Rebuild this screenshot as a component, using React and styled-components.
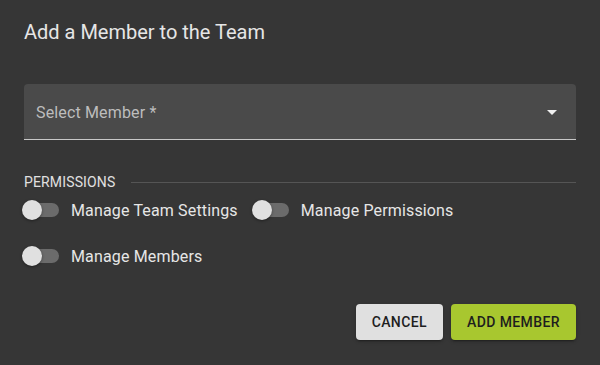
import React, { useState } from "react";
import styled, { createGlobalStyle } from "styled-components";

const GlobalStyle = createGlobalStyle`
  html, body {
    margin: 0;
    padding: 0;
    background: #363636;
    font-family: Roboto, "Liberation Sans", sans-serif;
  }
`;

const Dialog = styled.div`
  width: 600px;
  height: 365px;
  box-sizing: border-box;
  background: #363636;
  display: flex;
  flex-direction: column;
`;

const Title = styled.h2`
  margin: 0;
  padding: 16px 24px;
  font-size: 20px;
  line-height: 32px;
  font-weight: 400;
  color: #e6e6e6;
  letter-spacing: 0;
`;

const Content = styled.div`
  padding: 20px 24px 0;
  display: flex;
  flex-direction: column;
`;

const SelectField = styled.div`
  height: 55px;
  background: #4a4a4a;
  border-radius: 4px 4px 0 0;
  border-bottom: 1px solid #c8c8c8;
  display: flex;
  align-items: center;
  justify-content: space-between;
  padding: 0 12px;
`;

const SelectLabel = styled.span`
  font-size: 16px;
  color: #bdbdbd;
  padding-top: 1px;
  letter-spacing: 0.15px;
`;

const SectionHeader = styled.div`
  display: flex;
  align-items: center;
  gap: 16px;
  margin-top: 34px;
  font-size: 14px;
  color: #e0e0e0;
  line-height: 16px;
  letter-spacing: 0.15px;
  &::after {
    content: "";
    flex: 1;
    height: 1px;
    background: #555;
  }
`;

const Toggles = styled.div`
  display: flex;
  flex-wrap: wrap;
  row-gap: 22px;
  column-gap: 14px;
  margin-top: 8px;
  margin-left: -2px;
`;

const ToggleItem = styled.label`
  display: flex;
  align-items: center;
  gap: 12px;
  height: 24px;
  font-size: 16px;
  letter-spacing: 0.15px;
  color: #e6e6e6;
  cursor: pointer;
`;

const Track = styled.span`
  position: relative;
  width: 37px;
  height: 24px;
  flex-shrink: 0;
  &::before {
    content: "";
    position: absolute;
    left: 3px;
    right: 0;
    top: 5px;
    height: 14px;
    border-radius: 7px;
    background: ${({ $on }) => ($on ? "#8aa82a" : "#6b6b6b")};
  }
`;

const Thumb = styled.span`
  position: absolute;
  top: 2px;
  left: ${({ $on }) => ($on ? "17px" : "0")};
  width: 20px;
  height: 20px;
  border-radius: 50%;
  background: ${({ $on }) => ($on ? "#a8c630" : "#e0e0e0")};
  box-shadow: 0 1px 3px rgba(0, 0, 0, 0.4);
`;

const Actions = styled.div`
  margin-top: auto;
  padding: 0 24px 25px;
  display: flex;
  justify-content: flex-end;
  gap: 8px;
`;

const Button = styled.button`
  height: 36px;
  padding: 0 16px;
  border: none;
  border-radius: 4px;
  font-family: Roboto, "Liberation Sans", sans-serif;
  font-size: 14px;
  font-weight: 500;
  letter-spacing: 0.4px;
  text-transform: uppercase;
  color: #1e1e1e;
  background: ${({ $primary }) => ($primary ? "#a8c72f" : "#e0e0e0")};
  box-shadow: 0 3px 1px -2px rgba(0, 0, 0, 0.2), 0 2px 2px rgba(0, 0, 0, 0.14),
    0 1px 5px rgba(0, 0, 0, 0.12);
  cursor: pointer;
`;

const Toggle = ({ label }) => {
  const [on, setOn] = useState(false);
  return (
    <ToggleItem onClick={() => setOn(!on)}>
      <Track $on={on}>
        <Thumb $on={on} />
      </Track>
      {label}
    </ToggleItem>
  );
};

export default function App() {
  return (
    <>
      <GlobalStyle />
      <Dialog>
        <Title>Add a Member to the Team</Title>
        <Content>
          <SelectField>
            <SelectLabel>Select Member *</SelectLabel>
            <svg width="24" height="24" viewBox="0 0 24 24">
              <path d="M7 10l5 5 5-5z" fill="#f0f0f0" />
            </svg>
          </SelectField>
          <SectionHeader>PERMISSIONS</SectionHeader>
          <Toggles>
            <Toggle label="Manage Team Settings" />
            <Toggle label="Manage Permissions" />
            <Toggle label="Manage Members" />
          </Toggles>
        </Content>
        <Actions>
          <Button>Cancel</Button>
          <Button $primary>Add Member</Button>
        </Actions>
      </Dialog>
    </>
  );
}
